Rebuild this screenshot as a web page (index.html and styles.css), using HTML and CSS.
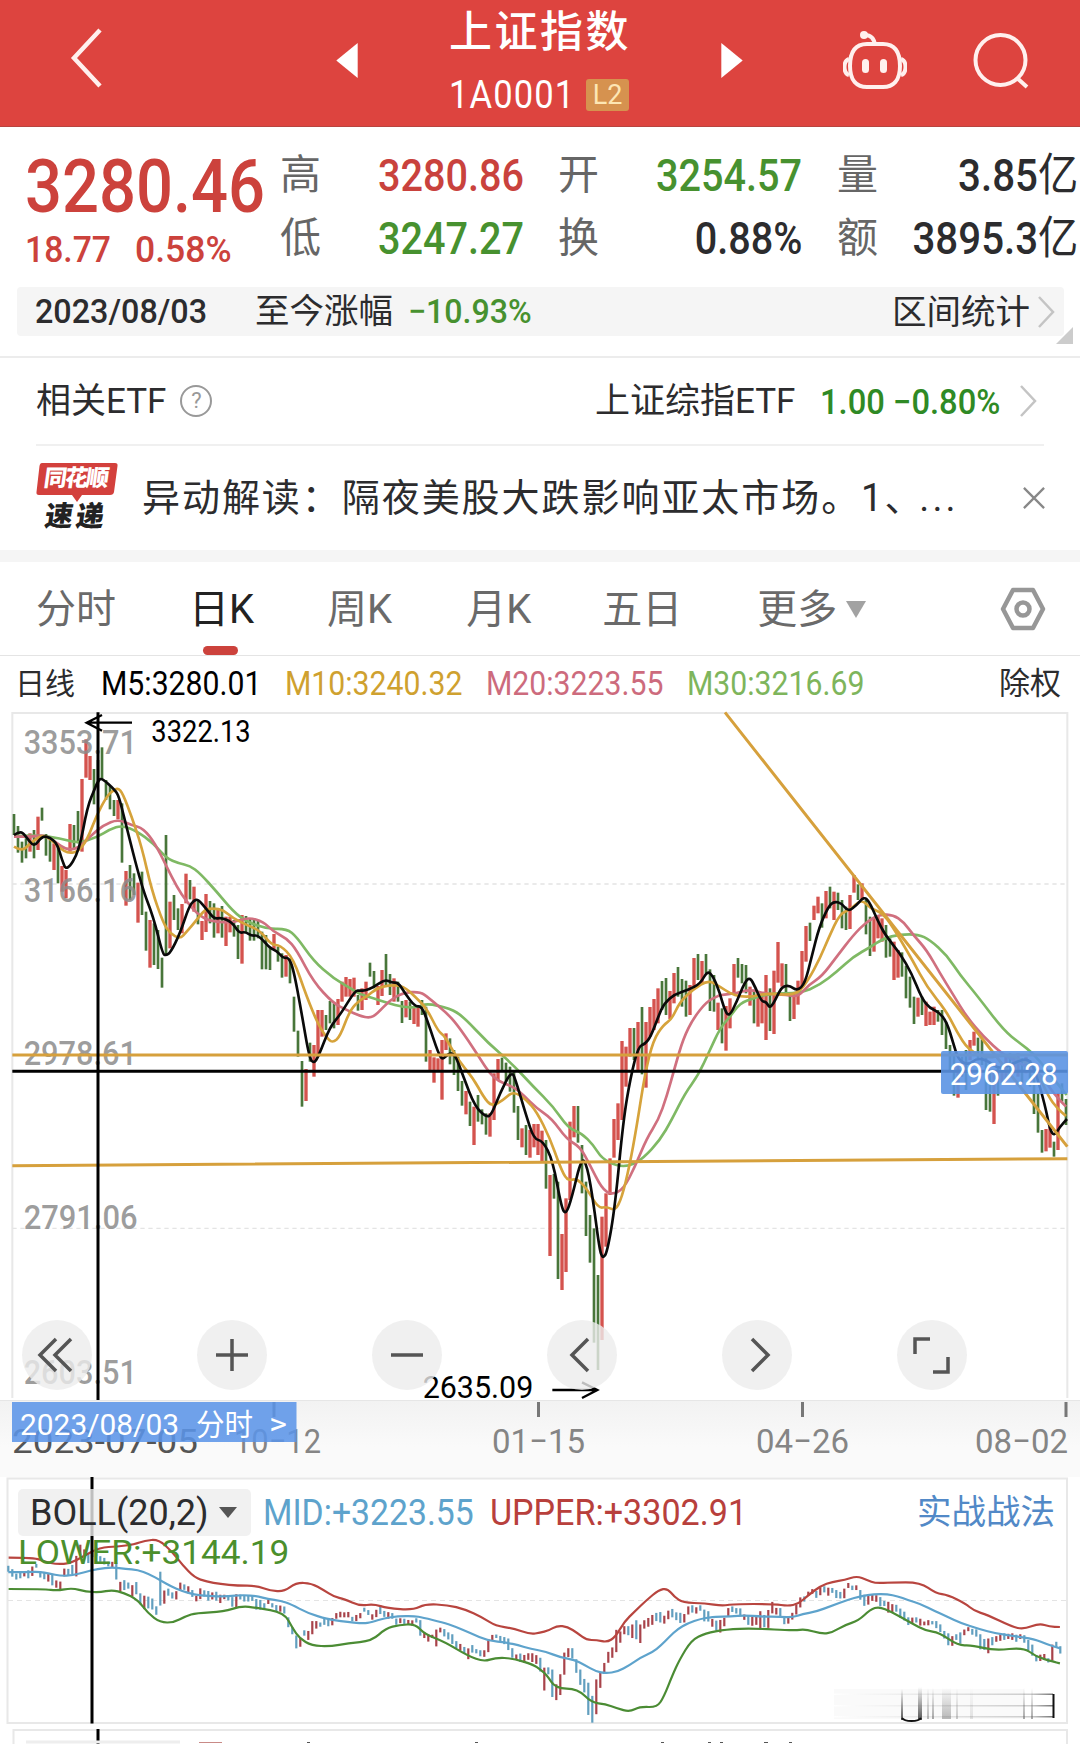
FILE: index.html
```html
<!DOCTYPE html>
<html lang="zh-CN">

<head>
	<meta charset="utf-8" />
	<title>上证指数</title>
	<link rel="stylesheet" href="styles.css">
</head>

<body>
	<header class="topbar">
		<svg class="back" viewBox="0 0 34 64"><path d="M30 4L4 32L30 60" /></svg>
		<svg class="arrow prev" viewBox="0 0 22 36"><path d="M22 0V36L0 18z" /></svg>
		<div class="title">
			<h1>上证指数</h1>
			<div class="code"><span class="num">1A0001</span><b>L2</b></div>
		</div>
		<svg class="arrow next" viewBox="0 0 22 36"><path d="M0 0V36L22 18z" /></svg>
		<svg class="robot" viewBox="0 0 64 60">
			<path d="M32 15C31 8 28 5 22 5" />
			<path d="M24 14H40C52 14 57 22 57 36C57 51 50 57 40 57H24C14 57 7 51 7 36C7 22 12 14 24 14z" />
			<path d="M6 29C0 31 0 43 6 45M58 29C64 31 64 43 58 45" />
			<circle cx="21" cy="5" r="4" class="dot" />
			<rect x="19" y="29" width="7" height="14" rx="3.5" class="dot" />
			<rect x="37" y="29" width="7" height="14" rx="3.5" class="dot" />
		</svg>
		<svg class="search" viewBox="0 0 58 58"><circle cx="28.5" cy="29" r="25" /><path d="M45 47L55 56" /></svg>
	</header>

	<section class="quote">
		<div class="last">
			<div class="price"><span class="num">3280.46</span></div>
			<div class="change"><span class="num">18.77</span><span class="num">0.58%</span></div>
		</div>
		<div class="cell"><i>高</i><span class="num red">3280.86</span></div>
		<div class="cell"><i>开</i><span class="num green">3254.57</span></div>
		<div class="cell c3"><i>量</i><span class="num">3.85<em>亿</em></span></div>
		<div class="cell"><i>低</i><span class="num green">3247.27</span></div>
		<div class="cell"><i>换</i><span class="num">0.88%</span></div>
		<div class="cell c3"><i>额</i><span class="num">3895.3<em>亿</em></span></div>
	</section>

	<section class="range">
		<span class="date"><span class="num">2023/08/03</span></span>
		<span class="since">至今涨幅</span>
		<span class="num rate green">−10.93%</span>
		<span class="stat">区间统计</span>
		<svg class="chev" viewBox="0 0 18 32"><path d="M2 1L16 16L2 31" /></svg>
		<span class="corner"></span>
	</section>

	<section class="etf">
		<span>相关ETF</span>
		<span class="help">?</span>
		<span class="etf-name">上证综指ETF</span>
		<span class="etf-num"><span class="num">1.00 −0.80%</span></span>
		<svg class="chev" viewBox="0 0 18 32"><path d="M2 1L16 16L2 31" /></svg>
	</section>

	<section class="news">
		<div class="logo">
			<svg viewBox="0 0 82 40"><path d="M6 0H79Q82 0 81.500 3L78 29Q77.500 32 74 32H46L41 39L36 32H3Q0 32 .5 29L3.500 3Q4 0 6 0z" /></svg>
			<b>同花顺</b>
			<strong>速递</strong>
		</div>
		<p>异动解读：隔夜美股大跌影响亚太市场。1、<span class="dots">...</span></p>
		<svg class="close" viewBox="0 0 24 24"><path d="M1 1L23 23M23 1L1 23" /></svg>
	</section>

	<nav class="tabs">
		<a>分时</a>
		<a class="active">日K</a>
		<a>周K</a>
		<a>月K</a>
		<a>五日</a>
		<a>更多<span class="down"></span></a>
		<svg class="gear" viewBox="0 0 46 44"><path d="M13 3H33L43 22L33 41H13L3 22z" /><circle cx="23" cy="22" r="6.500" /></svg>
	</nav>

	<section class="ma">
		<span class="kline">日线</span>
		<span class="m5"><span class="num">M5:3280.01</span></span>
		<span class="m10"><span class="num">M10:3240.32</span></span>
		<span class="m20"><span class="num">M20:3223.55</span></span>
		<span class="m30"><span class="num">M30:3216.69</span></span>
		<span class="adjust">除权</span>
	</section>

	<section class="chart">
		<svg id="kchart" viewBox="0 36 3240 2064">
			<path class="frame" d="M37 2094V39H3202V2094" />
			<path class="grid" d="M37 552H3202M37 1585H3202" />
			<g id="candles"></g>
			<g id="averages"></g>
			<g class="axis-text">
				<text x="71" y="161" textLength="340" lengthAdjust="spacingAndGlyphs">3353.71</text>
				<text x="71" y="605" textLength="340" lengthAdjust="spacingAndGlyphs">3166.16</text>
				<text x="71" y="1095" textLength="340" lengthAdjust="spacingAndGlyphs">2978.61</text>
				<text x="71" y="1588" textLength="342" lengthAdjust="spacingAndGlyphs">2791.06</text>
				<text x="71" y="2053" textLength="340" lengthAdjust="spacingAndGlyphs">2603.51</text>
			</g>
			<path class="draw" d="M37 1065H3202M37 1397L3202 1376M2175 37L3202 1340" />
			<path class="cross" d="M37 1114H3202M294 37V2100" />
			<path class="mark" d="M396 68H260M306 45L260 68L306 92M1657 2070H1790M1746 2047L1792 2070L1746 2094" />
			<g class="mark-text">
				<text x="454" y="125" textLength="298" lengthAdjust="spacingAndGlyphs">3322.13</text>
				<text x="1268" y="2093" textLength="332" lengthAdjust="spacingAndGlyphs">2635.09</text>
			</g>
			<rect class="tag" x="2823" y="1053" width="381" height="129" rx="6" />
			<text class="tag-text" x="2849" y="1156" textLength="324" lengthAdjust="spacingAndGlyphs">2962.28</text>
		</svg>
		<div class="tools">
			<svg viewBox="0 0 70 70"><path d="M34 19L18 35L34 51M49 19L33 35L49 51" /></svg>
			<svg viewBox="0 0 70 70"><path d="M19 35H51M35 19V51" /></svg>
			<svg viewBox="0 0 70 70"><path d="M19 35H51" /></svg>
			<svg viewBox="0 0 70 70"><path d="M41 19L25 35L41 51" /></svg>
			<svg viewBox="0 0 70 70"><path d="M30 19L46 35L30 51" /></svg>
			<svg viewBox="0 0 70 70"><path d="M18 34V19H33M51 37V52H36" /></svg>
		</div>
	</section>

	<section class="axis">
		<svg viewBox="0 0 1080 78">
			<path d="M274 1V16M538.500 1V16M802.500 1V16M1066 1V16" />
			<text x="12" y="52" textLength="186" lengthAdjust="spacingAndGlyphs" class="first">2023-07-05</text>
			<text x="234" y="52" textLength="87" lengthAdjust="spacingAndGlyphs">10−12</text>
			<text x="492" y="52" textLength="93" lengthAdjust="spacingAndGlyphs">01−15</text>
			<text x="756" y="52" textLength="93" lengthAdjust="spacingAndGlyphs">04−26</text>
			<text x="975" y="52" textLength="93" lengthAdjust="spacingAndGlyphs">08−02</text>
			<rect x="12" y="1" width="284.500" height="40" />
			<g class="on">
				<text x="20" y="34" textLength="159" lengthAdjust="spacingAndGlyphs">2023/08/03</text>
				<text x="196" y="34" textLength="57" lengthAdjust="spacingAndGlyphs">分时</text>
				<text x="269" y="33" textLength="18" lengthAdjust="spacingAndGlyphs">&gt;</text>
			</g>
		</svg>
	</section>

	<section class="boll">
		<svg id="bchart" viewBox="0 1477 1080 267">
			<path class="frame" d="M7.500 1723V1478.500H1067V1723zM13.500 1744V1730H1067V1744" />
			<path class="grid" d="M8 1600.500H1066" />
			<g id="bollbars"></g>
			<path id="mid" class="mid" transform="translate(-5.700 1533.600) scale(.3333 .09407)" />
			<g id="bands" transform="translate(0 1300) scale(.34435 .33333)"></g>
			<g class="watermark">
				<defs>
					<linearGradient id="fade"><stop offset="0" stop-color="#fff" /><stop offset=".9" stop-color="#ccc" /><stop offset="1" stop-color="#777" /></linearGradient>
					<linearGradient id="drop" x1="0" y1="0" x2="0" y2="1"><stop offset="0" stop-color="#555" stop-opacity="0" /><stop offset="1" stop-color="#555" /></linearGradient>
				</defs>
				<rect x="834" y="1689" width="190" height="30" fill="#888" opacity=".04" />
				<rect x="834" y="1693.500" width="219" height="1.500" fill="url(#fade)" />
				<rect x="834" y="1705" width="219" height="1.500" fill="url(#fade)" />
				<rect x="834" y="1716" width="219" height="1.500" fill="url(#fade)" />
				<g fill="url(#drop)">
					<rect x="901" y="1689" width="2" height="31" />
					<rect x="918" y="1687" width="4" height="33" />
					<rect x="927" y="1688" width="2" height="31" opacity=".4" />
					<rect x="932" y="1688" width="2" height="31" opacity=".5" />
					<rect x="942" y="1688" width="9" height="31" opacity=".4" />
					<rect x="956" y="1688" width="2" height="31" opacity=".3" />
					<rect x="970" y="1688" width="3" height="31" opacity=".15" />
					<rect x="1023" y="1688" width="2" height="31" opacity=".5" />
					<rect x="1031" y="1688" width="2" height="31" opacity=".5" />
				</g>
				<path d="M902 1718Q904 1721 911.500 1721T921 1718M1053.500 1694V1718" />
			</g>
			<path class="cross" d="M92 1477V1723.500M98 1729V1744" />
			<path class="peek" d="M26 1742H180" />
			<path class="peek-red" d="M199 1742.500H222" />
			<path class="peek-dark" d="M307 1742.500H310M475 1742.500H478M661 1742.500H664M708 1742.500H711M720 1742.500H723M764 1742.500H768M789 1742.500H792" />
		</svg>
		<div class="legend">
			<span class="picker"><span class="num">BOLL(20,2)</span><span class="down"></span></span>
			<span class="mid-val"><span class="num">MID:+3223.55</span></span>
			<span class="up-val"><span class="num">UPPER:+3302.91</span></span>
			<span class="tactic">实战战法</span>
		</div>
		<div class="lower"><span class="num">LOWER:+3144.19</span></div>
	</section>

	<script src="script.js"></script>
</body>

</html>
```

FILE: styles.css
```css
body {
	margin: 0;
	width: 1080px;
	height: 1744px;
	overflow: hidden;
	background: #fff;
	color: #2c2c2e;
	font-family: Roboto, "Noto Sans CJK SC", sans-serif;
}

svg {
	display: block;
	flex: none;
	fill: none;
}

i, em {
	font-style: normal;
}

/* narrow digits */
.num {
	display: inline-block;
	transform: scaleX(.91);
	transform-origin: left center;
	white-space: nowrap;
}

.red { color: #c9423d; }
.green { color: #47912f; }

/* Top bar */
.topbar {
	display: flex;
	height: 127px;
	background: #dd443f;
	border-bottom: 1px solid #b8443f;
	box-sizing: border-box;
	color: #fff;
}

.topbar svg {
	stroke: #fff0ee;
	stroke-width: 4;
}

.topbar .back {
	width: 34px;
	height: 64px;
	margin: 26px 0 0 70px;
	stroke-width: 4.500;
}

.topbar .arrow {
	width: 22px;
	height: 35px;
	margin-top: 43px;
	fill: #fff;
	stroke: none;
}

.prev { margin-left: 232px; }
.next { margin-left: 92px; }

.title {
	width: 180px;
	margin-left: 91px;
}

.title h1 {
	margin: 0;
	padding-top: 5px;
	font-size: 43px;
	font-weight: 500;
	line-height: 54px;
	letter-spacing: 2.500px;
	white-space: nowrap;
}

.code {
	display: flex;
	align-items: center;
	height: 38px;
	margin-top: 17px;
	font-size: 38px;
}

.code .num {
	width: 137px;
	letter-spacing: 1.200px;
}

.code b {
	width: 46px;
	height: 32px;
	border-radius: 3px;
	background: #d6924f;
	color: #fde6b4;
	font-size: 27px;
	font-weight: 400;
	line-height: 32px;
	text-align: center;
}

.robot {
	width: 64px;
	height: 60px;
	margin: 30px 0 0 100px;
}

.search {
	width: 58px;
	height: 58px;
	margin: 31px 0 0 65px;
}

.topbar .dot {
	fill: #fff0ee;
	stroke: none;
}

/* Quote */
.quote {
	display: grid;
	grid-template-columns: 255px 278px 279px 240px;
	grid-template-rows: 63px 63px;
	height: 142px;
	padding: 18px 0 0 25px;
	box-sizing: border-box;
	margin-bottom: 18px;
}

.last {
	grid-row: 1 / 3;
	color: #cc423c;
}

.price {
	height: 84px;
	font-size: 75px;
	font-weight: 500;
	line-height: 82px;
}

.price .num {
	transform: scaleX(.868);
}

.change {
	display: flex;
	font-size: 37px;
	font-weight: 500;
	line-height: 42px;
}

.change .num:first-child {
	width: 110px;
}

.change .num:last-child {
	transform: scaleX(.96);
}

.cell {
	display: flex;
	justify-content: space-between;
	width: 244px;
	font-size: 45px;
	font-weight: 500;
	line-height: 62px;
}

.c3 { width: 241px; }

.cell i {
	font-size: 41px;
	font-weight: 400;
	color: #666;
	line-height: 61px;
}

.cell .num {
	transform: scaleX(.88);
	transform-origin: right center;
}

.c3 .num {
	transform: scaleX(.895);
}

.cell em {
	font-weight: 400;
}

/* Range strip */
.range {
	position: relative;
	display: flex;
	align-items: center;
	height: 49px;
	margin: 0 16px 20px 17px;
	padding: 0 9px 0 18px;
	background: #f5f5f5;
	border-radius: 4px;
	font-size: 34.500px;
	line-height: 46px;
}

.date { width: 220px; font-weight: 500; font-size: 34px; margin-top: -2px; }
.date .num { transform: scaleX(.95); }
.since { width: 153px; line-height: 44px; margin-top: -2px; }
.rate { font-weight: 500; font-size: 34px; transform: scaleX(.945); margin-top: -2px; }
.stat { margin-left: auto; margin-right: 7px; }

.chev {
	width: 18px;
	height: 32px;
	stroke: #c4c4c4;
	stroke-width: 2.500;
}

.corner {
	position: absolute;
	right: -9px;
	bottom: -8px;
	border-left: 17px solid transparent;
	border-bottom: 17px solid #ccc;
}

/* ETF */
.etf {
	display: flex;
	align-items: center;
	height: 90px;
	margin-right: 36px;
	padding: 0 7px 0 36px;
	box-sizing: border-box;
	position: relative;
	font-size: 35px;
	line-height: 48px;
}

.etf::before,
.etf::after {
	content: "";
	position: absolute;
	top: 0;
	left: 0;
	width: 1080px;
	border-top: 2px solid #ececec;
}

.etf::after {
	top: auto;
	bottom: 0;
	left: 36px;
	width: 1008px;
	border-color: #f0f0f0;
}

.etf > span:first-child,
.etf-name {
	margin-top: 2px;
}

.help {
	width: 28px;
	height: 28px;
	margin-left: 14px;
	border: 2px solid #999;
	border-radius: 50%;
	color: #999;
	font-size: 22px;
	line-height: 28px;
	text-align: center;
}

.etf .etf-name {
	margin-left: auto;
	width: 225px;
}

.etf-num {
	width: 199px;
	margin-top: 4px;
	color: #2f8a25;
	font-weight: 500;
}

.etf-num .num {
	transform: scaleX(.935);
}

/* News */
.news {
	display: flex;
	align-items: center;
	height: 104px;
	padding: 0 34px 0 36px;
	border-bottom: 12px solid #f5f5f5;
}

.logo {
	position: relative;
	width: 82px;
	height: 74px;
	text-align: center;
}

.logo svg {
	width: 82px;
	height: 40px;
	fill: #d3403c;
	margin-top: 2px;
}

.logo b,
.logo strong {
	position: absolute;
	left: 8px;
	top: 5px;
	color: #fff;
	font-size: 23px;
	font-weight: 900;
	line-height: 26px;
	letter-spacing: -2px;
	transform: skewX(-8deg);
	white-space: nowrap;
}

.logo strong {
	left: 9px;
	top: 43px;
	color: #222;
	font-size: 28px;
	letter-spacing: 3px;
}

.news p {
	margin: 0 auto 0 24px;
	font-size: 38px;
	letter-spacing: 1.950px;
	line-height: 60px;
	white-space: nowrap;
}

.dots {
	letter-spacing: 3px;
	margin-left: -5px;
}

.close {
	width: 24px;
	height: 22px;
	stroke: #888;
	stroke-width: 2.500;
}

/* Tabs */
.tabs {
	position: relative;
	display: flex;
	height: 93px;
	border-bottom: 1px solid #e4e4e4;
	font-size: 40px;
	line-height: 95px;
	color: #6a6a6a;
}

.tabs a:first-child { margin-left: 36px; }
.tabs a:nth-child(2) { margin-left: 73px; }
.tabs a:nth-child(3) { margin-left: 73px; }
.tabs a:nth-child(4) { margin-left: 74px; }
.tabs a:nth-child(5) { margin-left: 71px; }
.tabs a:nth-child(6) { margin-left: 75px; }

.tabs .active {
	position: relative;
	color: #222;
}

.active::after {
	content: "";
	position: absolute;
	left: 14px;
	bottom: 0;
	width: 35px;
	height: 9px;
	border-radius: 5px;
	background: #cc423c;
}

.down {
	display: inline-block;
	border: 10px solid transparent;
	border-top: 17px solid #a2a2a2;
	border-bottom: 0;
	margin-left: 9px;
	vertical-align: 5px;
}

.gear {
	width: 46px;
	height: 44px;
	margin: 25px 34px 0 auto;
	stroke: #979797;
	stroke-width: 4.500;
	stroke-linejoin: round;
}

/* Moving averages */
.ma {
	display: flex;
	height: 56px;
	padding-left: 15px;
	font-size: 33px;
	line-height: 56px;
}

.ma .num { transform: scaleX(.915); }
.kline { width: 86px; font-size: 30px; }
.m5 { width: 184px; color: #000; }
.m10 { width: 201px; color: #cfa12f; }
.m20 { width: 201px; color: #cd6b7d; }
.m30 { width: 312px; color: #7eb55c; }
.adjust { font-size: 31px; white-space: nowrap; }

/* K line chart */
.chart {
	position: relative;
	height: 688px;
}

#kchart {
	width: 1080px;
	height: 688px;
	overflow: visible;
}

.frame {
	stroke: #e8e8e8;
	stroke-width: 6;
}

.grid {
	stroke: #e4e4e4;
	stroke-width: 4;
	stroke-dasharray: 13 11;
}

.axis-text {
	fill: #8c8c8c;
	fill-opacity: .85;
	font-size: 101px;
	font-weight: 500;
}

.up { fill: #d4534e; }
.fall { fill: #48763a; }

#averages path {
	stroke-width: 8;
	stroke-linejoin: round;
}

#averages .a5 { stroke: #0a0a0a; }
#averages .a10 { stroke: #d6a33b; }
#averages .a20 { stroke: #d0707f; }
#averages .a30 { stroke: #7fb964; }

.draw {
	stroke: #d6a03c;
	stroke-width: 9;
}

.cross {
	stroke: #000;
	stroke-width: 9;
}

.mark {
	stroke: #000;
	stroke-width: 7;
}

.mark-text { font-size: 92px; fill: #000; }
.tag { fill: #5b94e3; fill-opacity: .9; }
.tag-text { font-size: 92px; fill: #fff; }

.tools {
	position: absolute;
	left: 22px;
	bottom: 10px;
	display: flex;
	gap: 105px;
}

.tools svg {
	width: 70px;
	height: 70px;
	border-radius: 50%;
	background: rgba(236, 236, 236, .8);
	stroke: #555;
	stroke-width: 3.500;
}

/* Time axis */
.axis {
	height: 77px;
	background: linear-gradient(#f2f2f2, #fafafa 60%);
	border-top: 1px solid #e6e6e6;
	box-sizing: border-box;
}

.axis svg {
	width: 1080px;
	height: 78px;
	stroke: none;
	fill: #858585;
	font-size: 34px;
}

.axis path { stroke: #777; stroke-width: 3; }
.axis .first { fill: #555; }
.axis rect { fill: #5b94e8; fill-opacity: .87; }
.axis .on { fill: #fff; font-size: 30px; }

/* BOLL */
.boll {
	position: relative;
	height: 267px;
}

#bchart {
	position: absolute;
	top: 0;
	left: 0;
	width: 1080px;
	height: 267px;
}

#bchart .frame { stroke-width: 2; }
#bchart .grid { stroke-width: 1; stroke-dasharray: 5 4; }
#bchart .cross { stroke-width: 3; }

#bands path,
.mid {
	stroke-width: 2.200;
	vector-effect: non-scaling-stroke;
}

.mid { stroke: #5ea3cc; }
#bands .upper { stroke: #b8453f; }
#bands .lowerband { stroke: #4b8c34; }

.bup { fill: #a8434a; }
.bfall { fill: #619fbf; }

.watermark path {
	stroke: #111;
	stroke-width: 2;
}

.peek { stroke: #eee; stroke-width: 3; }
.peek-red { stroke: #c98a87; }
.peek-dark { stroke: #555; }

.legend {
	position: relative;
	display: flex;
	padding: 12px 0 0 18px;
	font-size: 36px;
	line-height: 48px;
	height: 47px;
}

.legend .num {
	transform: scaleX(.937);
}

.picker {
	width: 233px;
	height: 47px;
	margin-right: 12px;
	background: rgba(238, 238, 238, .8);
	border-radius: 5px;
	display: flex;
	align-items: center;
}

.legend .picker .num {
	margin-left: 12px;
	width: 180px;
	transform: scaleX(1);
}

.picker .down {
	border-width: 11px 9px 0;
	border-top-color: #555;
}

.mid-val { width: 227px; color: #5ea3cc; }
.up-val { width: 427px; color: #b8403c; }
.legend .up-val .num { transform: scaleX(.947); }
.tactic { color: #5289c7; font-size: 34.500px; line-height: 46px; white-space: nowrap; }

.lower {
	position: relative;
	padding-left: 18px;
	color: #4b8f2c;
	font-size: 34px;
	line-height: 32px;
}

.lower .num {
	transform: scaleX(1.035);
}
```

FILE: script.js
```js
// high/low of every day, one bar each 12 units; the number in front of a group is its y offset
var days = [
	[0, "g342-405 g378-458 g425-488 g415-475 r400-455 g390-475 r350-450 g323-362 g402-467 g415-485 r430-510 g435-550 r498-575 r510-595 r372-455 g375-445 g333-430 r237-455 r118-233 r168-240 g207-313 g180-250 g142-240 g240-300 g258-328 g300-348 r300-358 g310-488 r513-617 g495-600 g520-585 r548-668 g515-645 g635-752 r660-803 g670-795 g690-807 g773-863 g405-765 r605-745 g585-660 g625-690 r612-700 r521-610 g540-598 r560-635 g600-673 r663-720 r582-696 g603-670 g610-713 r625-700 g618-713 r650-738 r650-697 g660-710 g675-777 r645-791 g648-700 g655-722 g655-722 g660-715 g695-808 g705-808 g740-810 r702-748 g740-785 g760-833 r765-830 g775-850 g890-995 g992-1070 g1083-1220 r1107-1203 g1028-1085 r1035-1130 r930-1070 r930-1010 g945-990 g903-970 g910-985 r897-975 r845-905 r831-890 r837-890 r833-890 g885-932"],
	[600, "r265-330 r245-300 g188-230 g213-265 r258-315 r210-288 g162-255 g222-285 r235-305 g245-305 g303-369 r300-352 g305-360 r318-372 r322-380 g300-345 g320-485 r450-510 r472-548 r475-510 r420-599 r400-450 g415-493 g450-525 g470-573 g543-617 r573-643 g605-678 r620-735 g585-665 g628-673 g640-704 r640-710 r520-660 r477-540 g473-510 g488-545 g500-575 g515-638 g618-720 r685-742 g675-765 r690-773 r672-742 r672-765 r692-785 g720-866 r825-1068 g822-896 g845-1137 r1002-1170 r895-1116 r665-900 r618-712 g618-728 g735-880 g845-1008 g945-1088 g985-1328 g1125-1410 r950-1320 r880-1040 r775-885 r657-773 r610-720 r423-660 r440-560 r384-470 g384-480 r366-510 g321-523 r366-563 r321-410 r297-390 r265-370 g243-330 g234-345 r273-357 r219-310 g201-290 g237-320 g242-350 r255-345 r174-260 g162-240 r183-250 g162-220 g208-333 g225-335 r308-390"],
	[0, "g925-1030 r918-1052 r895-985 r792-880 g774-833 g792-850 g795-880 r860-917 g870-970 r880-980 r880-970 r825-1020 g865-993 r812-1002 r726-848 r790-860 g792-880 g880-963 r880-957 r842-914 r753-860 r678-785 g668-723 r617-660 r590-640 g610-683 r573-655 g560-625 r575-660 g578-630 g600-685 g620-690 r585-687 r525-578 g553-600 r550-600 g600-703 g650-768 r655-755 r650-715 r655-725 g675-773 g715-770 r725-840 r750-833 g757-830 g797-895 g830-923 g890-972 r893-950 g890-945 r905-978 r935-975 r920-975 g930-965 g930-1005 g965-1047 g1035-1115 g1060-1187 r1090-1193 g1070-1130 g1050-1170 r1020-1080 r995-1037 g1013-1075 g1018-1095 g1070-1230 g1120-1235 r1115-1272 g1100-1187 r1090-1150 r1070-1140 g1060-1130 r1065-1120 r1060-1130 g1075-1150 r1070-1120 g1080-1160 g1130-1242 g1180-1298 g1290-1358 r1287-1354 r1280-1343 g1325-1370 r1180-1350 g1150-1205 g1197-1275"]
];

var averages = {
	a30: [
		[0, 0, "42,408 110,405 180,415 235,430 290,412 330,388 366,376 410,393 460,430 500,475 535,490 570,497 600,520 650,575 700,635 740,665 800,687 860,686 890,710 940,782 1000,835 1060,870"],
		[1080, 600, "0,283 40,295 80,308 130,322 175,322 200,310 270,325 310,350 385,430 455,490 520,560 580,620 625,685 665,700 700,735 725,775 770,798 810,798 850,775 900,720 935,660 975,580 1015,525 1050,450"],
		[2160, 0, "0,985 30,950 60,910 100,895 150,880 240,880 300,855 350,815 400,770 450,742 490,715 540,703 595,703 630,720 680,765 720,825 770,885 850,990 900,1030 940,1060 980,1110 1020,1160 1040,1185"]
	],
	a20: [
		[0, 0, "42,410 100,410 135,405 165,425 200,450 235,445 270,410 310,375 354,358 395,375 430,385 465,430 500,500 530,560 560,605 600,650 640,665 700,668 745,652 790,665 820,695 860,715 890,750 940,845 1000,910 1040,930"],
		[1080, 600, "0,348 30,354 50,343 90,300 130,278 180,275 205,293 265,343 300,385 350,460 400,538 460,560 490,585 530,625 575,655 620,718 660,740 690,795 725,865 755,885 790,868 825,800 860,715 895,660 920,590 945,500 970,415 1000,355 1040,305 1070,290"],
		[2160, 0, "0,885 50,880 90,868 140,882 200,885 235,890 265,855 305,830 350,770 400,705 440,665 480,643 520,645 550,665 580,705 620,750 660,820 700,885 740,950 790,1010 850,1065 900,1090 960,1120 1000,1180 1038,1220"]
	],
	a10: [
		[0, 0, "42,440 66,455 90,430 126,405 150,415 180,445 205,460 235,455 262,418 290,345 320,290 338,272 354,264 368,280 395,350 425,440 455,570 490,670 510,700 540,717 560,695 590,660 615,628 640,625 670,630 700,655 740,675 780,692 815,735 840,735 880,775 920,890 955,975 985,1020 1000,1027 1020,1010 1050,930"],
		[1080, 600, "0,300 20,290 50,265 90,255 130,258 165,290 200,325 235,395 255,408 290,475 340,535 370,590 395,620 430,600 460,573 500,600 530,635 570,715 600,800 622,843 650,835 680,865 715,925 740,920 765,932 785,895 808,800 830,680 855,520 880,420 910,375 935,358 960,305 1000,268 1045,240"],
		[2160, 0, "0,860 30,880 60,890 100,890 140,880 200,885 235,878 265,840 300,775 325,715 360,640 390,630 425,597 450,625 490,640 530,700 580,785 620,860 680,935 710,995 745,1050 800,1075 850,1065 900,1075 950,1110 985,1190 1012,1225 1038,1248"]
	],
	a5: [
		[0, 0, "42,405 60,393 75,405 102,443 126,408 150,412 172,432 186,480 200,514 237,455 262,320 285,265 294,242 305,234 345,270 357,290 373,355 425,560 460,650 488,762 498,766 512,757 540,700 567,620 582,601 594,598 618,625 642,657 663,653 695,665 718,700 735,695 756,708 775,705 810,745 830,752 850,775 865,772 880,805 905,940 928,1075 942,1090 955,1070 990,980 1020,945 1065,872"],
		[1080, 600, "0,272 15,272 40,262 75,238 95,248 115,248 135,280 165,320 185,318 205,370 235,460 248,480 265,460 285,462 310,530 345,620 380,652 395,643 420,580 455,510 470,550 498,645 522,718 548,722 578,780 605,925 618,943 635,895 665,770 682,800 700,905 718,1045 728,1077 742,1055 765,920 790,660 812,530 835,440 855,432 872,410 895,350 912,310 945,282 985,270 1022,250 1042,212 1060,230"],
		[2160, 0, "0,880 12,925 27,952 50,905 75,845 90,832 105,860 125,905 138,905 152,928 180,870 192,858 210,857 232,873 255,850 275,770 298,680 325,620 342,604 365,610 385,635 410,615 432,590 448,605 470,655 495,705 540,760 575,820 605,895 630,925 655,935 680,965 700,1030 715,1080 745,1095 770,1075 800,1080 840,1110 890,1085 925,1075 945,1110 975,1215 990,1290 1003,1308 1020,1280 1041,1257"]
	]
};

var bands = {
	upper: [
		[0, 0, "25,773 100,773 130,785 165,793 205,790 240,770 290,742 340,740 390,733 420,722 460,718 500,755 530,795 565,833 600,845 640,852 690,857 745,857 785,872 825,875 860,848 905,850 940,870 970,890 1000,897 1045,918 1085,912 1125,925 1200,930 1235,912 1300,915 1350,928 1400,952 1440,978 1490,985 1540,1003"],
		[1568, 0, "0,998 25,992 50,977 80,980 110,1000 135,1020 165,1020 195,1027 220,1010 245,965 275,935 310,900 345,870 370,865 390,890 415,908 480,910 530,918 560,912 680,912 720,918 750,912 780,885 815,858 850,845 885,840 920,828 950,840 975,850 1020,847 1105,847 1150,880 1185,885 1235,910 1260,932 1300,945 1370,980 1405,988 1450,970 1480,980 1510,981"]
	],
	lowerband: [
		[0, 0, "25,867 130,867 165,872 210,864 250,875 290,877 325,870 360,878 400,900 430,940 465,967 505,968 540,948 570,939 650,935 700,918 745,923 825,938 850,985 870,1015 905,1037 960,1039 1010,1030 1080,1023 1120,985 1160,975 1205,972 1235,1003 1290,1025 1360,1068 1405,1085 1440,1073 1490,1075 1550,1095"],
		[1568, 0, "0,1108 20,1125 45,1165 110,1167 150,1208 190,1212 225,1225 260,1236 290,1220 340,1222 360,1190 385,1125 405,1080 440,1020 480,1000 540,988 620,985 740,992 770,987 820,1002 850,997 885,975 925,962 960,928 985,920 1020,935 1080,970 1120,992 1160,998 1215,1037 1255,1035 1320,1052 1405,1042 1440,1070 1490,1085 1510,1090"]
	]
};

// smooth path through the points
function line(parts) {
	var pts = [];
	parts.forEach(function (part) {
		part[2].split(" ").forEach(function (p) {
			var xy = p.split(",");
			pts.push([part[0] + Number(xy[0]), part[1] + Number(xy[1])]);
		});
	});
	var d = "M" + pts[0];
	for (var i = 1; i < pts.length - 1; i++) {
		var mx = (pts[i][0] + pts[i + 1][0]) / 2;
		var my = (pts[i][1] + pts[i + 1][1]) / 2;
		d += "Q" + pts[i] + " " + mx + "," + my;
	}
	return d + "L" + pts[pts.length - 1];
}

function drawLines(id, set) {
	var html = "";
	for (var name in set) {
		html += '<path class="' + name + '" d="' + line(set[name]) + '" />';
	}
	document.getElementById(id).innerHTML = html;
}

function drawBars() {
	var candles = "", small = "", x = 42;
	days.forEach(function (group) {
		group[1].split(" ").forEach(function (day) {
			var up = day[0] === "r";
			var range = day.slice(1).split("-");
			var top = group[0] + Number(range[0]);
			var size = range[1] - range[0];
			candles += '<rect class="' + (up ? "up" : "fall") + '" x="' + (up ? x - 5 : x - 4) + '" y="' + top + '" width="' + (up ? 10 : 8) + '" height="' + size + '" />';
			small += '<rect class="' + (up ? "bup" : "bfall") + '" x="' + (x / 3 - 6.8) + '" y="' + (1533.6 + top * 0.09407) + '" width="2.2" height="' + size * 0.09407 + '" />';
			x += 12;
		});
	});
	document.getElementById("candles").innerHTML = candles;
	document.getElementById("bollbars").innerHTML = small;
}

drawBars();
drawLines("averages", averages);
drawLines("bands", bands);
document.getElementById("mid").setAttribute("d", line(averages.a20));
```
